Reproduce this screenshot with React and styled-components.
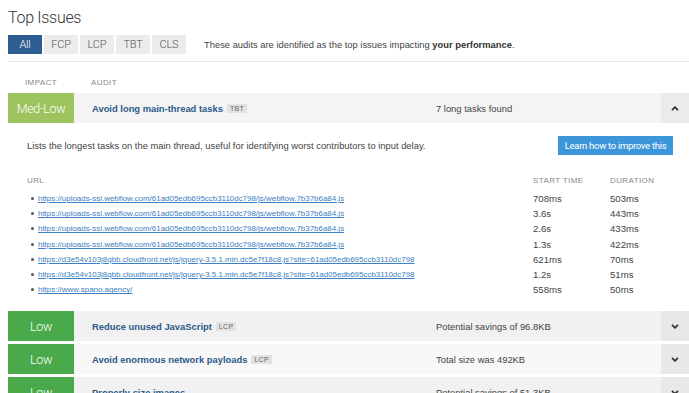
import React from 'react';
import styled, { createGlobalStyle } from 'styled-components';

const GlobalStyle = createGlobalStyle`
  body {
    margin: 0;
    background: #fff;
    font-family: "Liberation Sans", Arial, sans-serif;
    color: #444;
  }
`;

const Page = styled.div`
  width: 689px;
  box-sizing: border-box;
  padding-left: 8px;
  overflow: hidden;
`;

const Heading = styled.h2`
  margin: 0;
  padding-top: 7px;
  font-family: Roboto, sans-serif;
  font-weight: 300;
  font-size: 16px;
  letter-spacing: -0.3px;
  line-height: 21px;
  color: #333;
`;

const TabBar = styled.div`
  display: flex;
  align-items: center;
  gap: 2px;
  margin-top: 7px;
`;

const Tab = styled.div`
  width: 34px;
  height: 19px;
  display: flex;
  align-items: center;
  justify-content: center;
  font-family: Roboto, sans-serif;
  font-weight: 300;
  font-size: 11px;
  letter-spacing: -0.2px;
  background: ${p => (p.$active ? '#2d5d91' : '#ececec')};
  color: ${p => (p.$active ? '#fff' : '#555')};
`;

const TabNote = styled.div`
  margin-left: 16px;
  font-size: 9.4px;
  color: #444;
  b { color: #333; }
`;

const Divider = styled.div`
  margin-top: 7px;
  border-top: 1px solid #e8e8e8;
`;

const ColHead = styled.div`
  display: flex;
  align-items: flex-end;
  height: 25px;
  padding-bottom: 6px;
  font-size: 8px;
  letter-spacing: 0.4px;
  color: #888;
  text-transform: uppercase;
`;

const ImpactHead = styled.div`
  width: 66px;
  text-align: center;
`;

const AuditHead = styled.div`
  padding-left: 17px;
`;

const Row = styled.div`
  display: flex;
  height: 30px;
  margin-top: ${p => (p.$gap ? '3px' : '0')};
  background: ${p => p.$bg};
`;

const Badge = styled.div`
  width: 66px;
  flex-shrink: 0;
  display: flex;
  align-items: center;
  justify-content: center;
  font-family: Roboto, sans-serif;
  font-weight: 300;
  font-size: 12.5px;
  letter-spacing: -0.3px;
  color: #fff;
  background: ${p => p.$color};
`;

const AuditTitle = styled.div`
  width: 344px;
  padding-left: 18px;
  display: flex;
  align-items: center;
  font-size: 9.4px;
  font-weight: bold;
  color: #2b5a88;
`;

const Tag = styled.span`
  margin-left: 4px;
  padding: 1px 3px;
  font-size: 7px;
  font-weight: normal;
  letter-spacing: 0.3px;
  color: #666;
  background: #e2e2e2;
`;

const Info = styled.div`
  flex: 1;
  display: flex;
  align-items: center;
  font-size: 9.4px;
  color: #444;
`;

const Toggle = styled.div`
  width: 28px;
  flex-shrink: 0;
  display: flex;
  align-items: center;
  justify-content: center;
  background: ${p => p.$bg};
`;

const Details = styled.div`
  padding: 13px 16px 14px 19px;
`;

const DescRow = styled.div`
  display: flex;
  align-items: center;
  justify-content: space-between;
  font-size: 9.4px;
  color: #444;
`;

const Button = styled.div`
  width: 115px;
  height: 19px;
  display: flex;
  align-items: center;
  justify-content: center;
  background: #3d96da;
  color: #fff;
  font-family: Roboto, sans-serif;
  font-size: 9.5px;
  letter-spacing: -0.3px;
`;

const Table = styled.div`
  margin-top: 21px;
  display: grid;
  grid-template-columns: 1fr 77px 63px;
`;

const Th = styled.div`
  height: 15px;
  font-size: 8px;
  letter-spacing: 0.4px;
  color: #888;
  text-transform: uppercase;
`;

const Cell = styled.div`
  height: 15.2px;
  display: flex;
  align-items: center;
  font-size: 9.6px;
  color: #444;
`;

const UrlCell = styled(Cell)`
  padding-left: 4px;
  &::before {
    content: '';
    width: 3px;
    height: 3px;
    margin-right: 4px;
    background: #555;
    border-radius: 50%;
  }
  a {
    font-size: 7.95px;
    color: #3b80c2;
    text-decoration: underline;
    white-space: nowrap;
  }
`;

const Chevron = ({ up }) => (
  <svg width="8" height="5" viewBox="0 0 8 5">
    <path
      d={up ? 'M1 4.2 L4 1.2 L7 4.2' : 'M1 0.8 L4 3.8 L7 0.8'}
      fill="none"
      stroke="#333"
      strokeWidth="1.8"
    />
  </svg>
);

const tasks = [
  ['https://uploads-ssl.webflow.com/61ad05edb695ccb3110dc798/js/webflow.7b37b6a84.js', '708ms', '503ms'],
  ['https://uploads-ssl.webflow.com/61ad05edb695ccb3110dc798/js/webflow.7b37b6a84.js', '3.6s', '443ms'],
  ['https://uploads-ssl.webflow.com/61ad05edb695ccb3110dc798/js/webflow.7b37b6a84.js', '2.6s', '433ms'],
  ['https://uploads-ssl.webflow.com/61ad05edb695ccb3110dc798/js/webflow.7b37b6a84.js', '1.3s', '422ms'],
  ['https://d3e54v103j8qbb.cloudfront.net/js/jquery-3.5.1.min.dc5e7f18c8.js?site=61ad05edb695ccb3110dc798', '621ms', '70ms'],
  ['https://d3e54v103j8qbb.cloudfront.net/js/jquery-3.5.1.min.dc5e7f18c8.js?site=61ad05edb695ccb3110dc798', '1.2s', '51ms'],
  ['https://www.spano.agency/', '558ms', '50ms'],
];

const others = [
  { title: 'Reduce unused JavaScript', tag: 'LCP', info: 'Potential savings of 96.8KB', bg: '#f1f1f1' },
  { title: 'Avoid enormous network payloads', tag: 'LCP', info: 'Total size was 492KB', bg: '#f8f8f8' },
  { title: 'Properly size images', tag: 'LCP', info: 'Potential savings of 51.3KB', bg: '#f1f1f1' },
];

export default function App() {
  return (
    <>
      <GlobalStyle />
      <Page>
        <Heading>Top Issues</Heading>
        <TabBar>
          <Tab $active>All</Tab>
          <Tab>FCP</Tab>
          <Tab>LCP</Tab>
          <Tab>TBT</Tab>
          <Tab>CLS</Tab>
          <TabNote>
            These audits are identified as the top issues impacting <b>your performance</b>.
          </TabNote>
        </TabBar>
        <Divider />
        <ColHead>
          <ImpactHead>Impact</ImpactHead>
          <AuditHead>Audit</AuditHead>
        </ColHead>

        <Row $bg="#f4f4f4">
          <Badge $color="#9dc45f">Med-Low</Badge>
          <AuditTitle>
            Avoid long main-thread tasks <Tag>TBT</Tag>
          </AuditTitle>
          <Info>7 long tasks found</Info>
          <Toggle $bg="#ebebeb"><Chevron up /></Toggle>
        </Row>
        <Details>
          <DescRow>
            <span>Lists the longest tasks on the main thread, useful for identifying worst contributors to input delay.</span>
            <Button>Learn how to improve this</Button>
          </DescRow>
          <Table>
            <Th>URL</Th>
            <Th>Start Time</Th>
            <Th>Duration</Th>
            {tasks.map(([url, start, dur], i) => (
              <React.Fragment key={i}>
                <UrlCell><a>{url}</a></UrlCell>
                <Cell>{start}</Cell>
                <Cell>{dur}</Cell>
              </React.Fragment>
            ))}
          </Table>
        </Details>

        {others.map((o, i) => (
          <Row key={i} $bg={o.bg} $gap={i > 0}>
            <Badge $color="#4aaa4b">Low</Badge>
            <AuditTitle>
              {o.title} {i < 2 && <Tag>{o.tag}</Tag>}
            </AuditTitle>
            <Info>{o.info}</Info>
            <Toggle $bg="#e8e8e8"><Chevron /></Toggle>
          </Row>
        ))}
      </Page>
    </>
  );
}
